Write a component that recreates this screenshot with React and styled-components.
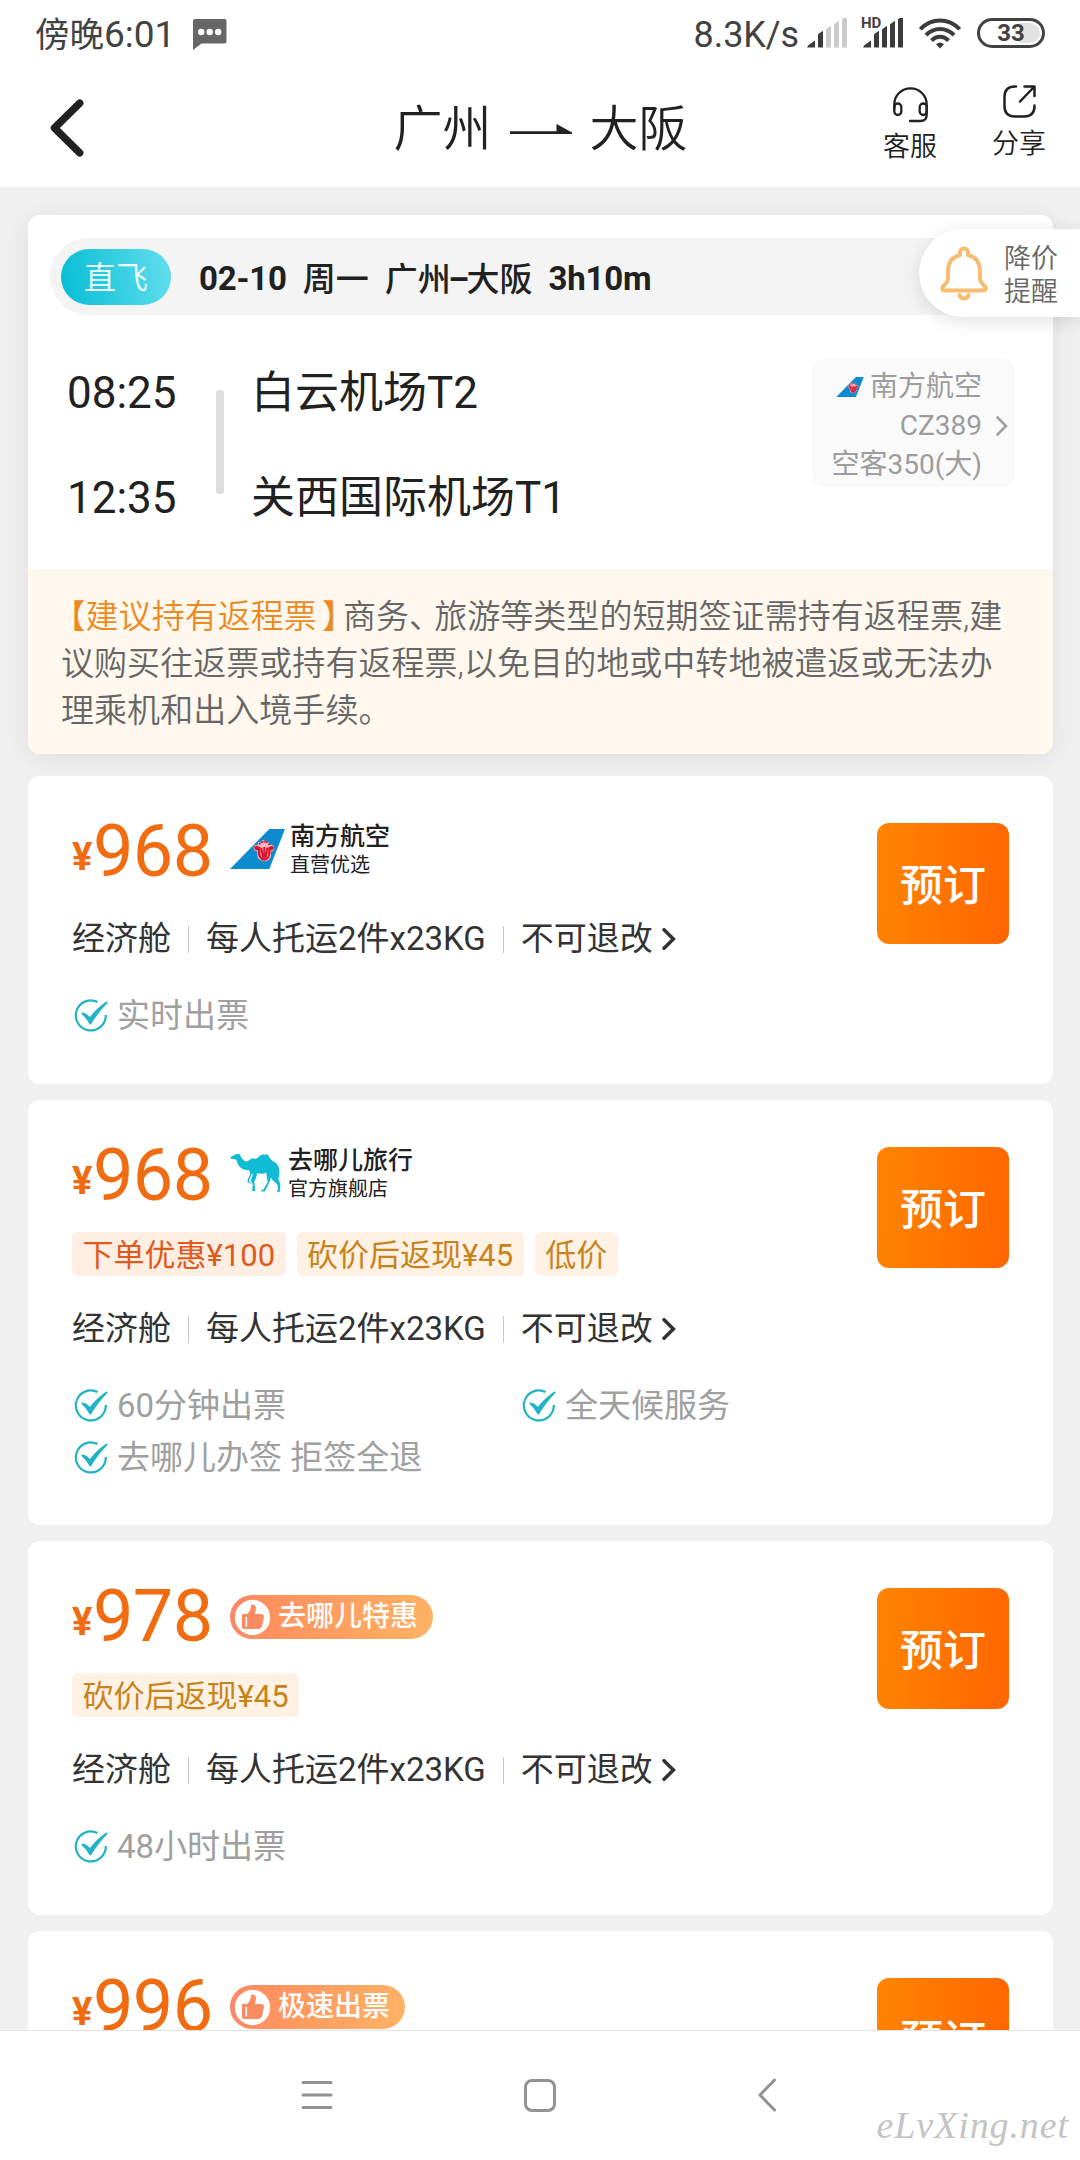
import React from 'react';
import styled, { createGlobalStyle } from 'styled-components';

const GlobalStyle = createGlobalStyle`
    * {
        box-sizing: border-box;
    }

    body {
        margin: 0;
        background-color: #f0f0f0;
        font-family: Roboto, 'Noto Sans CJK SC', sans-serif;
        color: #212121;
    }

    svg {
        display: block;
        flex-shrink: 0;
    }
`

const Screen = styled.div`
    position: relative;
    width: 1080px;
    height: 2160px;
    overflow: hidden;

    display: flex;
    flex-direction: column;
`

/* status bar */

const StatusBar = styled.div`
    height: 66px;
    padding: 0 35px;
    flex-shrink: 0;

    display: flex;
    align-items: center;
    justify-content: space-between;

    background-color: white;
    color: #424242;
    font-size: 36px;
    line-height: 66px;
`

const StatusGroup = styled.div`
    display: flex;
    align-items: center;
    padding-top: ${props => props.drop || '0'};
`

const Clock = styled.span`
    margin-right: 18px;
    font-size: 37px;

    small {
        font-size: 34.500px;
    }
`

const Speed = styled.span`
    margin-right: 8px;
    padding-top: 3px;
    letter-spacing: -0.1px;
`

const Signal = styled.div`
    position: relative;
    width: 41px;
    margin-right: ${props => props.gap};
`

const HdMark = styled.span`
    position: absolute;
    top: -1px;
    left: -2px;

    font-size: 15px;
    line-height: 12px;
    font-weight: 700;
`

const Battery = styled.div`
    width: 68px;
    height: 30px;
    padding: 2px;
    margin-left: 16px;

    border: 3px solid #424242;
    border-radius: 15px;
    background: linear-gradient(to right, white 64%, #e2e2e2 64%) content-box;

    font-size: 24px;
    line-height: 21px;
    font-weight: 700;
    text-align: center;
`

/* title bar */

const TitleBar = styled.div`
    height: 121px;
    padding: 0 34px 0 50px;
    flex-shrink: 0;

    display: grid;
    grid-template-columns: 1fr auto 1fr;
    align-items: start;

    background-color: white;
`

const BackSlot = styled.div`
    padding-top: 33px;
`

const Route = styled.h1`
    margin: 0;
    padding: 29px 15px 0 0;

    display: flex;
    align-items: center;
    gap: 18px;

    font-size: 49px;
    line-height: 70px;
    font-weight: 350;
`

const Actions = styled.div`
    padding-top: 19px;

    display: flex;
    justify-content: flex-end;
    gap: 55px;
`

const Action = styled.div`
    display: flex;
    flex-direction: column;
    align-items: center;
    padding-top: ${props => props.drop || '0'};

    font-size: 27px;
    line-height: 36px;
    font-weight: 350;

    span {
        margin-top: ${props => props.gap};
    }
`

/* flight summary */

const Content = styled.div`
    flex: 1;
    min-height: 0;
    padding: 28px 27px 0 28px;
    overflow: hidden;

    background-color: #f0f0f0;
`

const FlightCard = styled.section`
    height: 539px;
    margin-bottom: 22px;
    overflow: hidden;

    display: flex;
    flex-direction: column;
    justify-content: space-between;

    border-radius: 12px;
    background-color: white;
    box-shadow: 0 4px 24px rgba(0, 0, 0, 0.08);
`

const FlightHead = styled.div`
    height: 77px;
    margin: 23px 23px 0 22px;
    padding-left: 11px;

    display: flex;
    align-items: center;

    border-radius: 39px;
    background-color: #f4f4f4;

    font-size: 33px;
    font-weight: 700;
`

const DirectBadge = styled.div`
    width: 110px;
    height: 56px;
    margin-right: 28px;

    border-radius: 28px;
    background: linear-gradient(80deg, #05bdd4, #63deee);

    color: #f0feff;
    font-size: 32px;
    line-height: 58px;
    font-weight: 350;
    text-align: center;
`

const HeadText = styled.span`
    margin-right: 16px;
    padding-top: ${props => props.latin ? '3px' : '0'};
    font-weight: ${props => props.latin ? 700 : 500};
    letter-spacing: ${props => props.latin ? '-0.2px' : '0'};
`

const Dash = styled.span`
    margin: 0 -2.500px;
    font-weight: 700;
`

const FlightBody = styled.div`
    height: 254px;
    padding: 44px 38px 0 39px;

    display: flex;
    align-items: flex-start;
`

const StopColumn = styled.div`
    width: ${props => props.width};
    margin-top: 2px;

    display: flex;
    flex-direction: column;
    gap: 40px;

    font-size: 44px;
    line-height: 65px;
    white-space: nowrap;
`

const StopLine = styled.div`
    width: 8px;
    height: 104px;
    margin: 31px 27px 0 0;

    border-radius: 3px;
    background-color: #dedede;
`

const PlaneInfo = styled.div`
    width: 203px;
    height: 128px;
    margin-left: auto;
    padding-top: 5px;
    padding-left: 8px;
    padding-right: 7px;

    display: flex;
    align-items: center;
    gap: 14px;

    border-radius: 12px;
    background-color: #fafafa;

    color: #9d9d9d;
    font-size: 28px;
    line-height: 39px;
`

const PlaneText = styled.div`
    width: 162px;

    display: flex;
    flex-direction: column;
    align-items: flex-end;
    white-space: nowrap;
`

const PlaneName = styled.div`
    display: flex;
    align-items: center;
    gap: 6px;
`

const Notice = styled.p`
    height: 185px;
    margin: 0;
    padding: 24px 24px 0 33px;

    background-color: #fff8ee;
    color: #666;

    font-size: 33px;
    line-height: 47px;
    font-weight: 350;
    letter-spacing: 0.05px;
    white-space: nowrap;

    em {
        color: #ed8a1f;
        font-style: normal;
    }
`

// wide punctuation is set at half width and padded back out
const Mark = styled.span`
    margin-left: ${props => props.before || '0'};
    margin-right: ${props => props.after || '0'};
    font-feature-settings: 'halt';
`

/* fares */

const FareCard = styled.section`
    margin-bottom: 16px;
    padding: 32px 44px 0 44px;
    height: ${props => props.height};

    border-radius: 12px;
    background-color: white;
`

const FareMain = styled.div`
    height: ${props => props.tagged ? '145px' : '88px'};

    display: flex;
    align-items: flex-start;
    justify-content: space-between;
`

const FareHead = styled.div`
    height: 88px;

    display: flex;
    align-items: center;
`

const Price = styled.div`
    width: 158px;

    display: flex;
    align-items: baseline;

    color: #f16b10;
    font-size: 72px;
    line-height: 88px;
    letter-spacing: -0.6px;

    small {
        width: 21px;
        position: relative;
        top: -6px;
        font-size: 38px;
        line-height: 40px;
        font-weight: 700;
    }
`

const Seller = styled.div`
    height: 64px;

    display: flex;
    gap: ${props => props.gap};
`

const LogoSlot = styled.div`
    padding-top: 9px;
`

const SellerName = styled.div`
    font-size: 25px;
    line-height: 34px;
    font-weight: 500;

    small {
        display: block;
        font-size: 20px;
        line-height: 22px;
        font-weight: 400;
    }
`

const PromoBadge = styled.div`
    height: 44px;
    padding: 0 15px 0 4px;

    display: flex;
    align-items: center;
    gap: 7px;

    border-radius: 22px;
    background: linear-gradient(100deg, #fa8767, #ff915e 20%, #ffb366);

    color: white;
    font-size: 28px;
    line-height: 46px;
    font-weight: 500;
`

const BookButton = styled.button`
    width: 132px;
    height: 121px;
    margin-top: 15px;
    padding: 0 0 3px;

    border: none;
    border-radius: 12px;
    background: linear-gradient(95deg, #ff8500, #ff6500);

    color: white;
    font-family: inherit;
    font-size: 43px;
    font-weight: 500;
`

const Tags = styled.div`
    margin-top: 12px;

    display: flex;
    gap: 11px;
`

const Tag = styled.span`
    height: 44px;
    padding: 0 10.500px;

    border-radius: 6px;
    background-color: ${props => props.hot ? '#ffefe2' : '#fff2e4'};

    color: ${props => props.hot ? '#e0591d' : '#c8831b'};
    font-size: 31px;
    line-height: 47px;
    white-space: nowrap;
`

const Terms = styled.div`
    margin-top: ${props => props.tagged ? '32px' : '23px'};
    height: 40px;

    display: flex;
    align-items: center;

    color: #333;
    font-size: 33px;
    line-height: 40px;
    white-space: nowrap;

    svg {
        margin-left: 9px;
    }
`

const Split = styled.i`
    width: 1px;
    height: 27px;
    margin: 0 17px;
    background-color: #c9c9c9;
`

const Features = styled.div`
    margin-top: 31px;

    display: grid;
    grid-template-columns: 448px 1fr;

    color: #a0a0a0;
    font-size: 33px;
    line-height: 52px;
`

const Feature = styled.div`
    display: flex;
    align-items: center;
    gap: 9px;
    padding-left: 2px;
    white-space: nowrap;
`

/* overlays and system navigation */

const PriceAlert = styled.div`
    position: absolute;
    top: 229px;
    right: 0;
    width: 161px;
    height: 88px;
    padding-left: 21px;

    display: flex;
    align-items: center;
    gap: 16px;

    border-radius: 44px 0 0 44px;
    background-color: white;
    box-shadow: 0 4px 18px rgba(0, 0, 0, 0.12);

    color: #666;
    font-size: 27px;
    line-height: 33px;
    font-weight: 350;

    div {
        padding-top: 5px;
    }
`

const NavBar = styled.nav`
    position: relative;
    height: 130px;
    padding: 0 0 1px 301px;
    flex-shrink: 0;

    display: flex;
    align-items: center;

    border-top: 1px solid #e2e2e2;
    background-color: white;
`

const HomeKey = styled.div`
    width: 32px;
    height: 33px;
    margin: 0 202px 0 191px;

    border: 3px solid #929292;
    border-radius: 8px;
`

const Watermark = styled.span`
    position: absolute;
    right: 11px;
    bottom: 15px;

    color: #c4c4c4;
    font-family: 'Liberation Serif', serif;
    font-size: 38px;
    line-height: 40px;
    font-style: italic;
    letter-spacing: 0.9px;
`

const MessageIcon = () => (
    <svg width='34' height='32' viewBox='0 0 34 32'>
        <path d='M2 0h29.500a2 2 0 0 1 2 2v20.500a2 2 0 0 1-2 2H8.500L0 31V2a2 2 0 0 1 2-2z' fill='#666' />
        <circle cx='8.200' cy='13' r='3.200' fill='white' />
        <circle cx='16.700' cy='13' r='3.200' fill='white' />
        <circle cx='25.200' cy='13' r='3.200' fill='white' />
    </svg>
);

const SignalBars = ({ level }) => (
    <svg width='41' height='30' viewBox='0 0 41 30'>
        {[0, 1, 2, 3, 4].map(i => (
            <path
                key={i}
                fill={i < level ? '#3c3c3c' : '#cbcbcb'}
                d={i === 0
                    ? 'M0 29.500L1.500 27L8 22.500V29.500z'
                    : `M${3 + i * 8} 29.500V${21.200 - i * 5}l5 -3.500V29.500z`}
            />
        ))}
    </svg>
);

const WifiIcon = () => (
    <svg width='42' height='31' viewBox='0 0 42 31' fill='none' stroke='#3c3c3c' strokeWidth='4'>
        <path d='M1.300 11.200C12.500 -0.400 29.500 -0.400 40.700 11.200' />
        <path d='M7 17.200C15 9 27 9 35 17.200' />
        <path d='M12.500 22.600C17.500 17.600 24.500 17.600 29.500 22.600' />
        <path d='M17 26.300q4-3.600 8 0L21 30.500z' fill='#3c3c3c' stroke='none' />
    </svg>
);

const BackIcon = () => (
    <svg width='34' height='58' viewBox='0 0 34 58' fill='none' stroke='#212121' strokeWidth='7.500' strokeLinecap='round' strokeLinejoin='round'>
        <path d='M29.700 4.200L4.500 29L29.700 53.800' />
    </svg>
);

const RouteArrow = () => (
    <svg width='62' height='12' viewBox='0 0 62 12' fill='#212121'>
        <path d='M0 7.200H46.500V0L62 8.500V10H0z' />
    </svg>
);

const HeadsetIcon = () => (
    <svg width='35' height='36' viewBox='0 0 35 36' fill='none' stroke='#212121' strokeWidth='2.300' strokeLinecap='round'>
        <path d='M1.300 22V17.500a16.200 16.200 0 0 1 32.400 0V28q0 6-6.500 6H17' />
        <rect x='1.300' y='16.500' width='7' height='11.500' rx='3.500' />
        <rect x='26.700' y='16.500' width='7' height='11.500' rx='3.500' />
    </svg>
);

const ShareIcon = () => (
    <svg width='33' height='33' viewBox='0 0 33 33' fill='none' stroke='#212121' strokeWidth='2.500' strokeLinecap='round' strokeLinejoin='round'>
        <path d='M13 1.500H12Q1.500 1.500 1.500 12V21Q1.500 31.500 12 31.500H21Q31.500 31.500 31.500 21V20.500' />
        <path d='M21.500 1.500H31.500V11M31 2L17 16.500' />
    </svg>
);

const BellIcon = () => (
    <svg width='48' height='55' viewBox='0 0 48 55' fill='none' stroke='#f6bd70' strokeWidth='4' strokeLinecap='round' strokeLinejoin='round'>
        <path d='M20 9V6.500a4 4 0 0 1 8 0V9Q40 12 40 25V33Q40 35.500 45 40.500Q47 44.500 43 44.500H5Q1 44.500 3 40.500Q8 35.500 8 33V25Q8 12 20 9z' />
        <path d='M19.500 49Q20.500 52.500 24 52.500T28.500 49' />
    </svg>
);

const TailLogo = ({ width, height }) => (
    <svg width={width} height={height} viewBox='0 0 165 120'>
        <path d='M0 120L118 0H165L118 120z' fill='#0c8ccf' />
        <path d='M71 52Q76 46 83 49L85 38L92 41L97 34L103 34L108 41L115 38L118 48Q128 45 132 53Q135 65 123 67V80Q120 96 103 97Q84 95 82 79L81 67Q68 64 71 52z' fill='#f3b9c6' />
        <path d='M75 54Q80 50 89 57V75Q90 92 103 93Q117 90 117 76V57Q126 50 129 56Q130 63 119 61V74Q116 88 103 90Q88 88 86 74V61Q75 63 75 54z' fill='#d8172f' stroke='#d8172f' strokeWidth='5' />
        <path d='M94 56L99 86M103 54V88M112 56L107 86' stroke='#d8172f' strokeWidth='6' />
        <g fill='#d8172f'>
            <circle cx='89' cy='44' r='3' />
            <circle cx='96' cy='40' r='3' />
            <circle cx='103' cy='38' r='3' />
            <circle cx='110' cy='40' r='3' />
            <circle cx='117' cy='46' r='3' />
        </g>
    </svg>
);

const CamelLogo = () => (
    <svg width='51' height='40' viewBox='0 0 153 120' fill='#10bcd3'>
        <path d='M1 17L3 11L14 5L24 2L32 5L31 10Q37 19 44 24Q50 28 58 21L66 16Q75 18 81 16Q89 10 92 5L98 6L101 2L105 6L112 3L116 9Q119 17 128 24Q142 30 146 42Q149 53 148 67L145 76Q146 84 151 92L150 116H139L144 109L142 94Q129 86 123 74Q118 91 104 115L94 116L95 111L101 109L113 87Q110 72 109 59Q96 65 82 60Q79 76 73 85Q74 98 76 114H66L68 107L65 94L52 87L55 75L61 63L57 52Q38 52 27 39Q21 30 19 20L10 18z' />
        <path d='M64 64L69 63L62 83L69 94L68 103L65 93L57 85z' fill='white' />
    </svg>
);

const ThumbIcon = () => (
    <svg width='37' height='37' viewBox='0 0 37 37'>
        <circle cx='18.500' cy='18.500' r='17.700' fill='white' />
        <path d='M8 15h5q4-3 4-9q4-2 5 3l-1 6h6q3 0 3 3l-2 9q-1 3-4 3H10q-2 0-2-2z' fill='#fc8b62' />
        <path d='M12.300 18v9.500' stroke='white' strokeWidth='1.600' />
    </svg>
);

const CheckIcon = () => (
    <svg width='34' height='34' viewBox='0 0 34 34' fill='none' stroke='#22b3c9'>
        <path d='M23.500 3A15 15 0 1 0 31.800 16' strokeWidth='2.200' />
        <path d='M8.500 14.500Q12 15 16 19.500Q22 11 32.500 3.500Q24 12 16.300 24.500Q13 18.500 8.500 14.500z' fill='#22b3c9' strokeWidth='2' strokeLinejoin='round' />
    </svg>
);

const Chevron = ({ width, height, color, stroke }) => (
    <svg width={width} height={height} viewBox='0 0 12 20' fill='none' stroke={color} strokeWidth={stroke} strokeLinecap='round'>
        <path d='M1.500 1.500L10 10L1.500 18.500' />
    </svg>
);

const brands = {
    csair: { logo: <TailLogo width='55' height='40' />, gap: '5px', name: '南方航空', note: '直营优选' },
    qunar: { logo: <CamelLogo />, gap: '7px', name: '去哪儿旅行', note: '官方旗舰店' },
};

const fares = [
    { id: 1, price: 968, height: '308px', brand: 'csair', tags: [], features: ['实时出票'] },
    {
        id: 2,
        price: 968,
        height: '425px',
        brand: 'qunar',
        tags: ['下单优惠¥100', '砍价后返现¥45', '低价'],
        features: ['60分钟出票', '全天候服务', '去哪儿办签 拒签全退'],
    },
    { id: 3, price: 978, height: '374px', promo: '去哪儿特惠', tags: ['砍价后返现¥45'], features: ['48小时出票'] },
    { id: 4, price: 996, height: '374px', promo: '极速出票', tags: [], features: [] },
];

const Fare = ({ fare }) => {
    const brand = brands[fare.brand];
    const tagged = fare.tags.length > 0 ? 1 : undefined;

    return (
        <FareCard height={fare.height}>
            <FareMain tagged={tagged}>
                <div>
                    <FareHead>
                        <Price><small>¥</small>{fare.price}</Price>
                        {brand && (
                            <Seller gap={brand.gap}>
                                <LogoSlot>{brand.logo}</LogoSlot>
                                <SellerName>{brand.name}<small>{brand.note}</small></SellerName>
                            </Seller>
                        )}
                        {fare.promo && <PromoBadge><ThumbIcon />{fare.promo}</PromoBadge>}
                    </FareHead>
                    {tagged && (
                        <Tags>
                            {fare.tags.map(tag => (
                                <Tag key={tag} hot={tag.startsWith('下单') ? 1 : undefined}>{tag}</Tag>
                            ))}
                        </Tags>
                    )}
                </div>
                <BookButton>预订</BookButton>
            </FareMain>
            <Terms tagged={tagged}>
                经济舱<Split />每人托运2件x23KG<Split />不可退改
                <Chevron width='14' height='22' color='#333' stroke='3.200' />
            </Terms>
            <Features>
                {fare.features.map(feature => (
                    <Feature key={feature}><CheckIcon />{feature}</Feature>
                ))}
            </Features>
        </FareCard>
    );
};

const App = () => {
    return (
        <Screen lang='zh-CN'>
            <GlobalStyle />

            <StatusBar>
                <StatusGroup drop='3px'>
                    <Clock><small>傍晚</small>6:01</Clock>
                    <MessageIcon />
                </StatusGroup>
                <StatusGroup>
                    <Speed>8.3K/s</Speed>
                    <Signal gap='15px'><SignalBars level={2} /></Signal>
                    <Signal gap='15px'>
                        <HdMark>HD</HdMark>
                        <SignalBars level={5} />
                    </Signal>
                    <WifiIcon />
                    <Battery>33</Battery>
                </StatusGroup>
            </StatusBar>

            <TitleBar>
                <BackSlot><BackIcon /></BackSlot>
                <Route>广州<RouteArrow />大阪</Route>
                <Actions>
                    <Action drop='2px' gap='6px'><HeadsetIcon /><span>客服</span></Action>
                    <Action gap='8px'><ShareIcon /><span>分享</span></Action>
                </Actions>
            </TitleBar>

            <Content>
                <FlightCard>
                    <FlightHead>
                        <DirectBadge>直飞</DirectBadge>
                        <HeadText latin={1}>02-10</HeadText>
                        <HeadText>周一</HeadText>
                        <HeadText>广州<Dash>–</Dash>大阪</HeadText>
                        <HeadText latin={1}>3h10m</HeadText>
                    </FlightHead>
                    <FlightBody>
                        <StopColumn width='149px'>
                            <span>08:25</span>
                            <span>12:35</span>
                        </StopColumn>
                        <StopLine />
                        <StopColumn width='340px'>
                            <span>白云机场T2</span>
                            <span>关西国际机场T1</span>
                        </StopColumn>
                        <PlaneInfo>
                            <PlaneText>
                                <PlaneName><TailLogo width='28' height='20' />南方航空</PlaneName>
                                <span>CZ389</span>
                                <span>空客350(大)</span>
                            </PlaneText>
                            <Chevron width='12' height='20' color='#a0a0a0' stroke='2.600' />
                        </PlaneInfo>
                    </FlightBody>
                    <Notice>
                        <em><Mark before='8px'>【</Mark>建议持有返程票<Mark before='5px' after='4.500px'>】</Mark></em>
                        商务<Mark after='8.500px'>、</Mark>旅游等类型的短期签证需持有返程票,建<br />
                        议购买往返票或持有返程票,以免目的地或中转地被遣返或无法办<br />
                        理乘机和出入境手续。
                    </Notice>
                </FlightCard>

                {fares.map(fare => <Fare key={fare.id} fare={fare} />)}
            </Content>

            <NavBar>
                <svg width='32' height='30' viewBox='0 0 32 30' stroke='#929292' strokeWidth='3' strokeLinecap='round'>
                    <path d='M2 2.500H30M2 15H30M2 27.500H30' />
                </svg>
                <HomeKey />
                <svg width='19' height='34' viewBox='0 0 19 34' fill='none' stroke='#929292' strokeWidth='3' strokeLinecap='round' strokeLinejoin='round'>
                    <path d='M16.500 2L2 17L16.500 32' />
                </svg>
                <Watermark>eLvXing.net</Watermark>
            </NavBar>

            <PriceAlert>
                <BellIcon />
                <div>降价<br />提醒</div>
            </PriceAlert>
        </Screen>
    );
};

export default App;
